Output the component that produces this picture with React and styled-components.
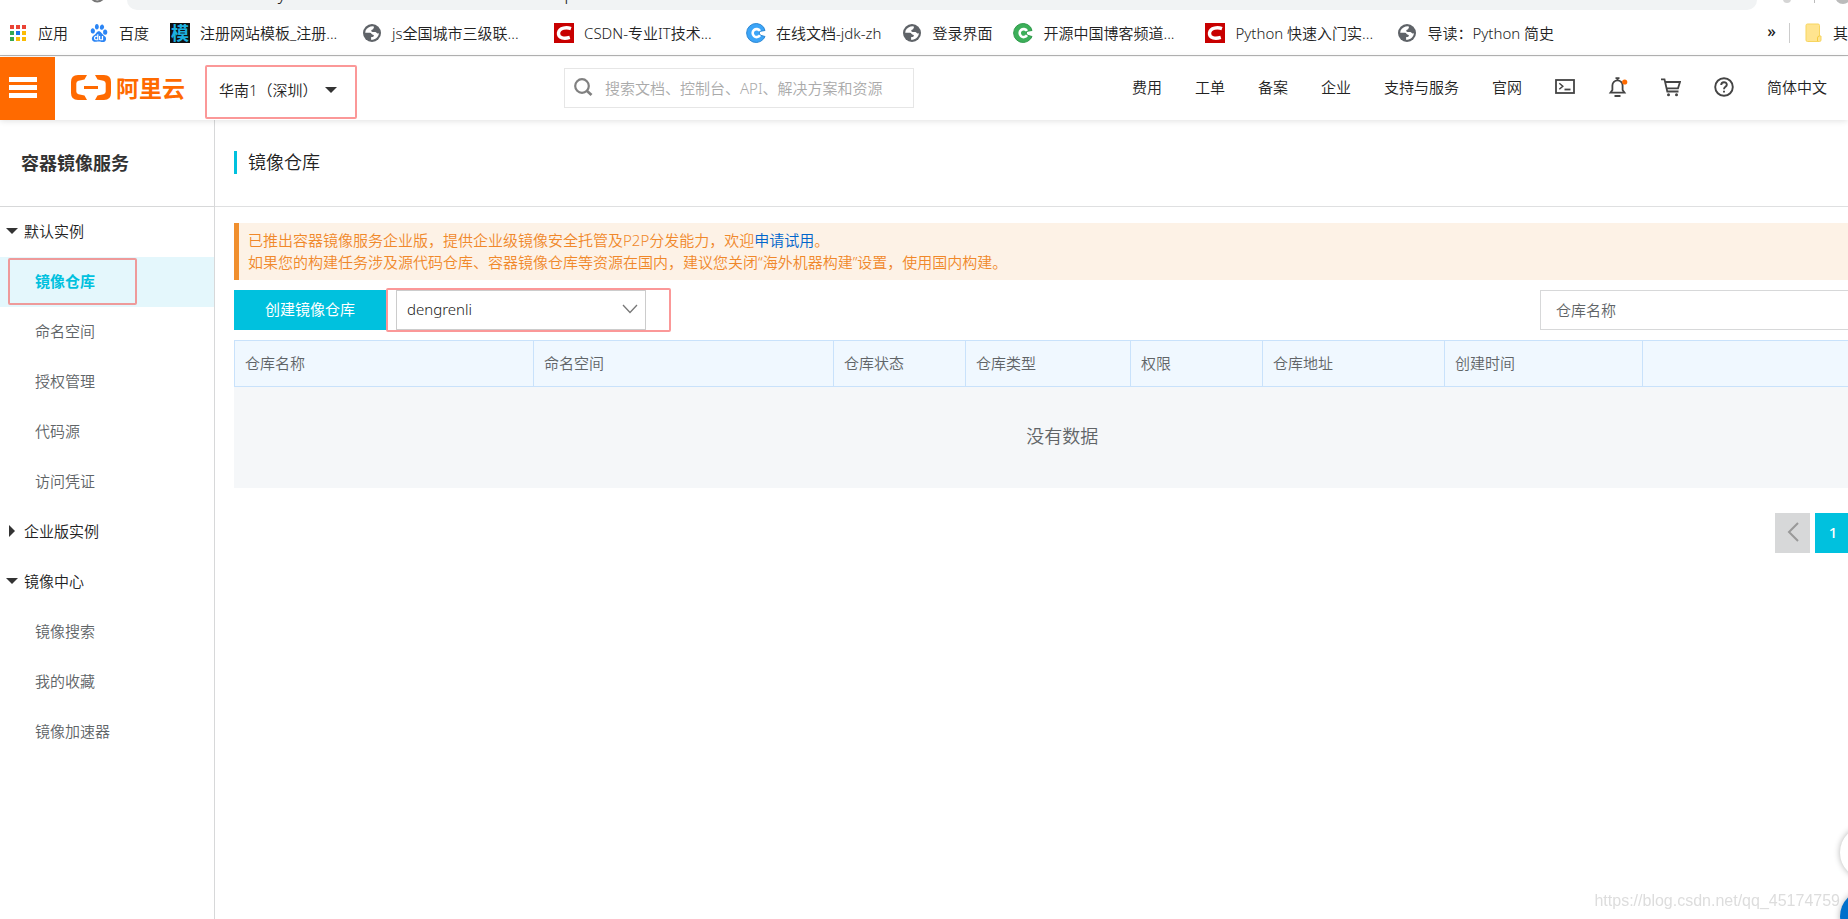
import React from 'react';
import styled, { createGlobalStyle } from 'styled-components';
import { SiBaidu } from 'react-icons/si';

const apps = ['#ea4335', '#ea4335', '#ea4335', '#34a853', '#1a73e8', '#fbbc04', '#34a853', '#fbbc04', '#fbbc04'];

const AppsIcon = () => (
    <svg width="20" height="20" viewBox="0 0 20 20">
        {apps.map((color, i) => (
            <rect key={i} x={2 + (i % 3) * 6} y={2 + Math.floor(i / 3) * 6} width="4" height="4" fill={color} />
        ))}
    </svg>
);

const GlobeIcon = () => (
    <svg width="20" height="20" viewBox="0 0 20 20">
        <circle cx="10" cy="10" r="9" fill="#5f6368" />
        <path
            d="M11.5 3.2C8 3 5 4.600 3.600 7.600L3.200 9.700L8 9.800C9.500 9.900 9.400 11.700 10.900 11.700C12.300 11.800 12.200 13.700 10.600 13.900L9.200 14.100L9 16.800C13.200 17 16.500 14.300 16.900 10.300L15.500 10.400C14.600 10.500 14.500 9.200 13.300 9.100L10.500 9C8.800 8.900 8.800 6.700 10.500 6.500C11.600 6.400 11.200 5 12 4.500Z"
            fill="#fff"
        />
    </svg>
);

const CsdnIcon = () => (
    <svg width="20" height="20" viewBox="0 0 20 20">
        <rect width="20" height="20" fill="#c80000" />
        <path d="M17 5.600C13 4.200 5.300 4.300 4.500 10C4 15.700 11 15.800 15.800 14.400" fill="none" stroke="#fff" strokeWidth="3.400" />
    </svg>
);

const RoundIcon = ({ color, edge }) => (
    <svg width="20" height="20" viewBox="0 0 20 20">
        <path
            d="M17.500 4A9.500 9.500 0 1 0 17.500 16L19 13.500L14.500 12.300L13 10L14.500 8.200L19 7.500Z"
            fill={color}
            stroke={edge}
            strokeWidth="1"
        />
        <path d="M14 7.900A4 4 0 1 0 14 12.300" fill="none" stroke="#fff" strokeWidth="2.600" />
    </svg>
);

const FolderIcon = () => (
    <svg width="18" height="20" viewBox="0 0 18 20">
        <path d="M1 2.500Q1 1 2.500 1H13Q14.500 1 14.500 2.500V13H16V17Q16 18.500 14.500 18.500H2.500Q1 18.500 1 17Z" fill="#ffe48f" stroke="#f7d560" />
        <path d="M12.500 18V15Q12.500 13 14.500 13" fill="none" stroke="#f5cb3c" />
    </svg>
);

const LogoMark = () => (
    <svg width="40" height="25" viewBox="0 0 40 25">
        <path d="M16 0H7Q0 0 0 7V18Q0 25 7 25H16L13.500 20.500L7.500 19.300Q5.300 18.800 5.300 16.600V8.400Q5.300 6.200 7.500 5.700L13.500 4.500Z" fill="#ff6a00" />
        <path d="M24 0H33Q40 0 40 7V18Q40 25 33 25H24L26.500 20.500L32.500 19.300Q34.700 18.800 34.700 16.600V8.400Q34.700 6.200 32.500 5.700L26.500 4.500Z" fill="#ff6a00" />
        <rect x="13" y="11" width="14" height="3" fill="#ff6a00" />
    </svg>
);

const SearchIcon = () => (
    <svg width="20" height="20" viewBox="0 0 20 20" fill="none" stroke="#808080">
        <circle cx="8" cy="8" r="6.800" strokeWidth="2.200" />
        <path d="M12.800 12.800L17.500 17" strokeWidth="2.800" />
    </svg>
);

const TerminalIcon = () => (
    <svg width="20" height="20" viewBox="0 0 20 20" fill="none" stroke="#444" strokeWidth="1.800">
        <rect x="1" y="3" width="18" height="13" />
        <path d="M4.300 6.300L7.800 9.300L4.300 12.300" strokeWidth="1.500" />
        <path d="M9.500 12.500H15.500" />
    </svg>
);

const BellIcon = () => (
    <svg width="20" height="20" viewBox="0 0 20 20" fill="none" stroke="#444" strokeWidth="1.800">
        <path d="M2.500 15.600H16.500L14.600 13V8.500A5.100 5.100 0 0 0 4.400 8.500V13Z" />
        <path d="M9.500 3.400V1M7.500 1.200H11.500M6.500 19H12.500" />
        <circle cx="16.700" cy="5" r="2.600" fill="#ff6a00" stroke="none" />
    </svg>
);

const CartIcon = () => (
    <svg width="20" height="20" viewBox="0 0 20 20" fill="none" stroke="#444" strokeWidth="1.800">
        <path d="M0 2.300H3.500L6.300 14.500H17.500M4.300 5H19L17 11.300H5.800" />
        <circle cx="7.500" cy="17.800" r="1.500" fill="#444" stroke="none" />
        <circle cx="15.500" cy="17.800" r="1.500" fill="#444" stroke="none" />
    </svg>
);

const HelpIcon = () => (
    <svg width="20" height="20" viewBox="0 0 20 20" fill="none" stroke="#444" strokeWidth="1.900">
        <circle cx="10" cy="10" r="8.800" />
        <path d="M7.200 8C7.200 4.300 12.800 4.300 12.800 7.700C12.800 9.800 10 9.800 10 12.200" />
        <path d="M10 13.800V15.600" />
    </svg>
);

const bookmarks = [
    { text: '应用', icon: <AppsIcon /> },
    { text: '百度', icon: <SiBaidu size={18} color="#2b85f5" /> },
    { text: '注册网站模板_注册...', mo: true, cut: true },
    { text: 'js全国城市三级联...', icon: <GlobeIcon />, cut: true },
    { text: 'CSDN-专业IT技术...', icon: <CsdnIcon />, cut: true },
    { text: '在线文档-jdk-zh', icon: <RoundIcon color="#3ca5f8" edge="#2b86d2" /> },
    { text: '登录界面', icon: <GlobeIcon /> },
    { text: '开源中国博客频道...', icon: <RoundIcon color="#3caf59" edge="#2f9a4b" />, cut: true },
    { text: 'Python 快速入门实...', icon: <CsdnIcon />, cut: true },
    { text: '导读：Python 简史', icon: <GlobeIcon /> },
];

const links = ['费用', '工单', '备案', '企业', '支持与服务', '官网'];

const tools = [
    { label: 'Cloud Shell', icon: <TerminalIcon /> },
    { label: '消息', icon: <BellIcon /> },
    { label: '购物车', icon: <CartIcon /> },
    { label: '帮助', icon: <HelpIcon /> },
];

const menu = [
    { title: '默认实例', open: true, items: ['镜像仓库', '命名空间', '授权管理', '代码源', '访问凭证'] },
    { title: '企业版实例', open: false, items: [] },
    { title: '镜像中心', open: true, items: ['镜像搜索', '我的收藏', '镜像加速器'] },
];

const columns = [
    ['仓库名称', '299px'],
    ['命名空间', '300px'],
    ['仓库状态', '132px'],
    ['仓库类型', '165px'],
    ['权限', '132px'],
    ['仓库地址', '182px'],
    ['创建时间', '198px'],
    ['', 'auto'],
];

const App = () => {
    return (
        <Page>
            <GlobalStyle />
            <AddressRow>
                <Reload viewBox="0 0 127 10">
                    <path d="M92 -1Q97 4 103 -1" fill="none" stroke="#777" strokeWidth="2" />
                </Reload>
                <AddressBar>cr.console.aliyun.com/cn-shenzhen/instances/repositories</AddressBar>
                <Extras viewBox="0 0 91 10">
                    <circle cx="30" cy="-1" r="4" fill="#d5d5d5" />
                    <path d="M57.500 0V3" stroke="#bbb" />
                    <circle cx="86" cy="-4" r="8" fill="#bbb" />
                </Extras>
            </AddressRow>
            <Bookmarks>
                {bookmarks.map((b) => (
                    <Bookmark key={b.text} href="#" $cut={b.cut}>
                        <Favicon>{b.mo ? <MoIcon>模</MoIcon> : b.icon}</Favicon>
                        {b.text}
                    </Bookmark>
                ))}
                <More type="button">»</More>
                <Divider />
                <Folder href="#">
                    <FolderIcon />
                    其
                </Folder>
            </Bookmarks>

            <Header>
                <MenuButton type="button" aria-label="菜单">
                    <svg width="28" height="21" viewBox="0 0 28 21" fill="#fff">
                        <rect width="28" height="5" />
                        <rect y="8" width="28" height="5" />
                        <rect y="16" width="28" height="5" />
                    </svg>
                </MenuButton>
                <Logo href="#">
                    <LogoMark />
                    阿里云
                </Logo>
                <Region type="button">
                    华南1（深圳）
                    <Caret $open />
                </Region>
                <SearchBox>
                    <SearchIcon />
                    <input type="text" aria-label="搜索" placeholder="搜索文档、控制台、API、解决方案和资源" />
                </SearchBox>
                <Nav>
                    {links.map((text) => (
                        <a key={text} href="#">{text}</a>
                    ))}
                    {tools.map((tool) => (
                        <IconButton key={tool.label} type="button" aria-label={tool.label}>{tool.icon}</IconButton>
                    ))}
                    <a href="#">简体中文</a>
                </Nav>
            </Header>

            <Body>
                <Sidebar>
                    <Service>容器镜像服务</Service>
                    {menu.map((group) => (
                        <div key={group.title}>
                            <Group type="button">
                                <Arrow><Caret $open={group.open} /></Arrow>
                                {group.title}
                            </Group>
                            {group.items.map((item) =>
                                item === '镜像仓库' ? (
                                    <ActiveRow key={item}>
                                        <ActiveItem href="#">{item}</ActiveItem>
                                    </ActiveRow>
                                ) : (
                                    <Item key={item} href="#">{item}</Item>
                                )
                            )}
                        </div>
                    ))}
                </Sidebar>

                <Main>
                    <TitleBar>
                        <Title>镜像仓库</Title>
                    </TitleBar>
                    <Content>
                        <Notice>
                            已推出容器镜像服务企业版，提供企业级镜像安全托管及P2P分发能力，欢迎<a href="#">申请试用</a>。
                            <br />
                            如果您的构建任务涉及源代码仓库、容器镜像仓库等资源在国内，建议您关闭“海外机器构建”设置，使用国内构建。
                        </Notice>
                        <Toolbar>
                            <Create type="button">创建镜像仓库</Create>
                            <Marked>
                                <SelectBox>
                                    <select aria-label="命名空间" defaultValue="dengrenli">
                                        <option>dengrenli</option>
                                    </select>
                                    <svg width="16" height="10" viewBox="0 0 16 10">
                                        <path d="M1 1L8 8.500L15 1" fill="none" stroke="#777" strokeWidth="1.300" />
                                    </svg>
                                </SelectBox>
                            </Marked>
                            <Filter type="text" aria-label="仓库名称" placeholder="仓库名称" />
                        </Toolbar>
                        <Table>
                            <thead>
                                <tr>
                                    {columns.map(([name, width]) => (
                                        <Th key={name} $width={width}>{name}</Th>
                                    ))}
                                </tr>
                            </thead>
                            <tbody>
                                <tr>
                                    <Empty colSpan={columns.length}>没有数据</Empty>
                                </tr>
                            </tbody>
                        </Table>
                        <Pager>
                            <PageButton type="button" aria-label="上一页" disabled>
                                <svg width="12" height="20" viewBox="0 0 12 20">
                                    <path d="M11 1L2 10L11 19" fill="none" stroke="#999" strokeWidth="2" />
                                </svg>
                            </PageButton>
                            <PageButton type="button" $current>1</PageButton>
                            <PageButton type="button" aria-label="下一页" disabled>
                                <svg width="12" height="20" viewBox="0 0 12 20">
                                    <path d="M1 1L10 10L1 19" fill="none" stroke="#999" strokeWidth="2" />
                                </svg>
                            </PageButton>
                        </Pager>
                    </Content>
                </Main>
            </Body>

            <Watermark>https://blog.csdn.net/qq_45174759</Watermark>
            <Float type="button" aria-label="反馈" $bottom={40} />
            <Float type="button" aria-label="咨询" $bottom={-24} $blue />
        </Page>
    );
}

const GlobalStyle = createGlobalStyle`
    * {
        box-sizing: border-box;
    }

    body {
        margin: 0;
        background: #fff;
        color: #222;
        font-family: 'Noto Sans', 'Noto Sans CJK SC', sans-serif;
        font-size: 15px;
        font-weight: 350;
        line-height: 22px;
        overflow: hidden;
    }

    button, input, select {
        font: inherit;
        color: inherit;
        border: none;
        padding: 0;
        background: none;
        outline: none;
    }

    a {
        color: inherit;
        text-decoration: none;
    }

    svg {
        display: block;
        flex: none;
    }
`;

const Page = styled.div`
    display: flex;
    flex-direction: column;
    height: 100vh;
    overflow: hidden;
`;

const AddressRow = styled.div`
    display: flex;
    flex: none;
    height: 10px;
    overflow: hidden;
`;

const Reload = styled.svg`
    width: 127px;
    height: 10px;
`;

const Extras = styled.svg`
    width: 91px;
    height: 10px;
`;

const AddressBar = styled.div`
    flex: 1;
    display: flex;
    align-items: flex-end;
    padding-left: 48px;
    background: #f1f3f4;
    border-radius: 0 0 20px 20px;
    font-size: 18px;
    line-height: 34px;
    overflow: hidden;
`;

const Bookmarks = styled.nav`
    display: flex;
    flex: none;
    align-items: center;
    height: 46px;
    padding-left: 8px;
    border-bottom: 1px solid #b4b4b4;
    white-space: nowrap;
    margin-bottom: 1px;
`;

const Bookmark = styled.a`
    display: flex;
    align-items: center;
    gap: 10px;
    width: ${(props) => (props.$cut ? '171px' : 'auto')};
    margin-right: 21px;
`;

const Favicon = styled.span`
    display: grid;
    place-items: center;
    width: 20px;
    height: 20px;
`;

const MoIcon = styled.span`
    width: 20px;
    height: 20px;
    background: #111;
    color: #1cb0e0;
    font-size: 18px;
    font-weight: 700;
    line-height: 20px;
    text-align: center;
`;

const More = styled.button`
    margin-left: auto;
    padding-bottom: 4px;
    font-size: 16px;
    font-weight: 500;
`;

const Divider = styled.span`
    width: 1px;
    height: 20px;
    margin: 0 15px 0 13px;
    background: #ccc;
`;

const Folder = styled.a`
    display: flex;
    align-items: center;
    gap: 10px;
`;

const Header = styled.header`
    display: flex;
    flex: none;
    align-items: center;
    height: 63px;
    padding-right: 21px;
    box-shadow: 0 1px 6px rgba(0, 0, 0, 0.12);
    position: relative;
    z-index: 1;
    white-space: nowrap;
    background: #fff;
`;

const MenuButton = styled.button`
    display: flex;
    align-items: center;
    align-self: stretch;
    width: 55px;
    padding: 0 0 2px 9px;
    background: #ff6a00;
`;

const Logo = styled.a`
    display: flex;
    align-items: center;
    gap: 5px;
    margin-left: 16px;
    padding-bottom: 2px;
    width: 114px;
    color: #ff6a00;
    font-size: 23px;
    font-weight: 700;
`;

const Region = styled.button`
    display: flex;
    align-items: center;
    gap: 7px;
    width: 152px;
    height: 54px;
    margin: 6px 0 0 20px;
    padding: 0 0 4px 12px;
    border: 2px solid #fb9898;
    border-radius: 2px;
`;

const Caret = styled.span`
    border: 6px solid transparent;
    ${(props) => (props.$open
        ? 'border-top-color: #333; border-bottom: none;'
        : 'border-left-color: #333; border-right: none;')}
`;

const SearchBox = styled.label`
    display: flex;
    align-items: center;
    gap: 11px;
    width: 350px;
    height: 40px;
    margin: 0 0 2px 207px;
    padding: 0 9px;
    border: 1px solid #e6e6e6;

    input {
        flex: 1;
        min-width: 0;
    }

    input::placeholder {
        color: #aaa;
    }
`;

const Nav = styled.nav`
    display: flex;
    align-items: center;
    gap: 33px;
    margin-left: auto;
    padding-bottom: 4px;
`;

const IconButton = styled.button`
    cursor: pointer;
`;

const Body = styled.div`
    display: flex;
    flex: 1;
    min-height: 0;
`;

const Sidebar = styled.aside`
    flex: none;
    width: 215px;
    border-right: 1px solid #d7d8d9;
`;

const Service = styled.h2`
    display: flex;
    align-items: center;
    height: 87px;
    margin: 0;
    padding-left: 21px;
    border-bottom: 1px solid #d7d8d9;
    color: #333;
    font-size: 18px;
    font-weight: 700;
`;

const Group = styled.button`
    display: flex;
    align-items: center;
    width: 100%;
    height: 50px;
    padding-bottom: 2px;
`;

const Arrow = styled.span`
    display: grid;
    place-items: center;
    width: 24px;
`;

const Item = styled.a`
    display: flex;
    align-items: center;
    height: 50px;
    padding: 0 0 2px 35px;
    color: #606467;
`;

const ActiveRow = styled.div`
    height: 50px;
    padding: 1px 0 0 8px;
    background: #e4f7fc;
`;

const ActiveItem = styled.a`
    display: flex;
    align-items: center;
    width: 129px;
    height: 47px;
    padding: 0 0 2px 25px;
    border: 2px solid #ee9a9a;
    border-radius: 2px;
    color: #00c1de;
    font-weight: 700;
`;

const Main = styled.main`
    flex: 1;
    min-width: 0;
    overflow: hidden;
`;

const TitleBar = styled.div`
    display: flex;
    align-items: center;
    height: 87px;
    padding: 0 0 2px 19px;
    border-bottom: 1px solid #dfe0e1;
`;

const Title = styled.h1`
    margin: 0;
    padding-left: 11px;
    border-left: 3px solid #00c1de;
    font-size: 18px;
    font-weight: 350;
    line-height: 23px;
`;

/* the table runs past the right edge of the window */
const Content = styled.div`
    margin-right: -42px;
    padding: 16px 0 0 19px;
`;

const Notice = styled.p`
    margin: 0 0 8px;
    padding: 6px 9px 7px;
    border-left: 5px solid #f08f2e;
    background: #fdf2e6;
    color: #f0882a;

    a {
        color: #06c;
    }
`;

const Toolbar = styled.div`
    display: flex;
    align-items: center;
    height: 44px;
    margin-bottom: 8px;
`;

const Create = styled.button`
    width: 152px;
    height: 40px;
    padding-bottom: 2px;
    background: #00c1de;
    color: #fff;
    font-weight: 400;
`;

const Marked = styled.div`
    width: 285px;
    height: 44px;
    padding-left: 8px;
    border: 2px solid #fb9898;
    border-radius: 2px;
`;

const SelectBox = styled.div`
    position: relative;
    width: 250px;

    select {
        width: 100%;
        height: 40px;
        padding: 0 0 2px 10px;
        border: 1px solid #ccc;
        appearance: none;
    }

    svg {
        position: absolute;
        right: 8px;
        top: 14px;
        pointer-events: none;
    }
`;

const Filter = styled.input`
    width: 350px;
    height: 40px;
    margin-left: auto;
    padding: 0 15px 1px;
    border: 1px solid #d7d8d9;

    &::placeholder {
        color: #606467;
    }
`;

const Table = styled.table`
    width: 100%;
    border-collapse: collapse;
    table-layout: fixed;
`;

const Th = styled.th`
    width: ${(props) => props.$width};
    height: 46px;
    padding: 0 10px 2px;
    border: 1px solid #c9e2fb;
    background: #f0f8ff;
    color: #606467;
    font-weight: 350;
    text-align: left;
`;

const Empty = styled.td`
    height: 101px;
    padding: 0 0 2px;
    border-left: 1px solid #f5f7f9;
    background: #f5f7f9;
    color: #606467;
    font-size: 18px;
    text-align: center;
`;

const Pager = styled.div`
    display: flex;
    justify-content: flex-end;
    gap: 5px;
    margin-top: 25px;
`;

const PageButton = styled.button`
    display: grid;
    place-items: center;
    width: 35px;
    height: 40px;
    padding: 0 0 2px 1px;
    background: ${(props) => (props.$current ? '#00c1de' : '#d7d8d9')};
    color: #fff;
    font-weight: 500;
`;

const Watermark = styled.div`
    position: fixed;
    right: 8px;
    bottom: 7px;
    color: #ddd;
    font-family: 'Liberation Sans', Arial, sans-serif;
    font-size: 16px;
`;

const Float = styled.button`
    position: fixed;
    right: -45px;
    bottom: ${(props) => props.$bottom}px;
    width: 53px;
    height: 53px;
    border-radius: 50%;
    background: ${(props) => (props.$blue ? '#0070cc' : '#fff')};
    box-shadow: 0 0 6px rgba(0, 0, 0, 0.3);
`;

export default App;
